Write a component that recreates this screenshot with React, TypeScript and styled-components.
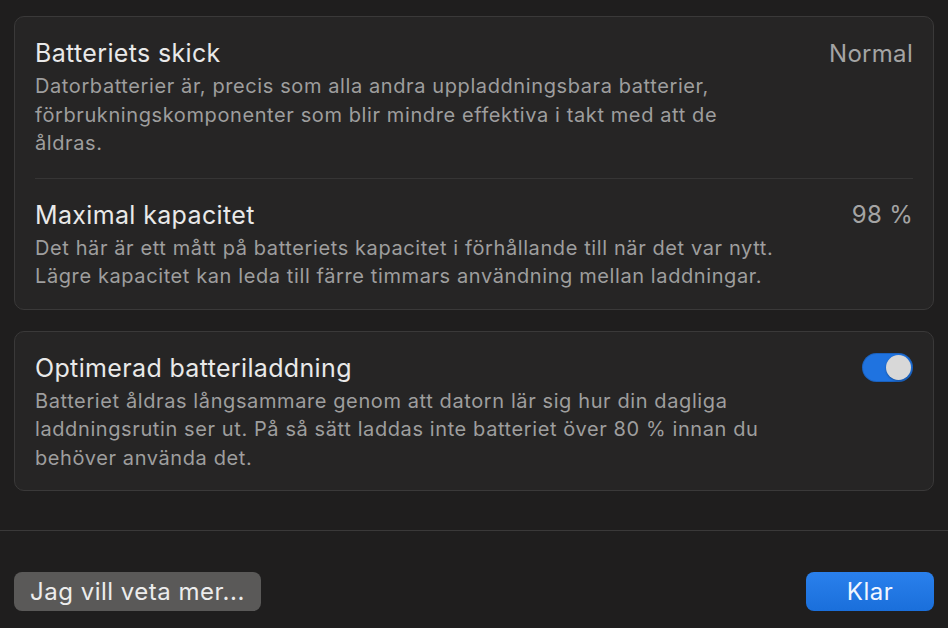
import styled, { createGlobalStyle } from "styled-components"

const GlobalStyle = createGlobalStyle`
  html, body {
    margin: 0;
    padding: 0;
    background: #1f1e1e;
  }
  body {
    font-family: Inter, "Noto Sans", "Liberation Sans", sans-serif;
    -webkit-font-smoothing: antialiased;
  }
`

type Row = {
  title: string
  value?: string
  toggle?: boolean
  lines: string[]
}

const health: Row[] = [
  {
    title: "Batteriets skick",
    value: "Normal",
    lines: [
      "Datorbatterier är, precis som alla andra uppladdningsbara batterier,",
      "förbrukningskomponenter som blir mindre effektiva i takt med att de",
      "åldras.",
    ],
  },
  {
    title: "Maximal kapacitet",
    value: "98 %",
    lines: [
      "Det här är ett mått på batteriets kapacitet i förhållande till när det var nytt.",
      "Lägre kapacitet kan leda till färre timmars användning mellan laddningar.",
    ],
  },
]

const charging: Row = {
  title: "Optimerad batteriladdning",
  toggle: true,
  lines: [
    "Batteriet åldras långsammare genom att datorn lär sig hur din dagliga",
    "laddningsrutin ser ut. På så sätt laddas inte batteriet över 80 % innan du",
    "behöver använda det.",
  ],
}

const SettingRow = ({ row }: { row: Row }) => (
  <StyledRow>
    <StyledHead>
      <StyledTitle>{row.title}</StyledTitle>
      {row.value && <StyledValue>{row.value}</StyledValue>}
      {row.toggle && (
        <StyledSwitch>
          <StyledKnob />
        </StyledSwitch>
      )}
    </StyledHead>
    <StyledDesc>
      {row.lines.map((l) => (
        <span key={l}>{l}</span>
      ))}
    </StyledDesc>
  </StyledRow>
)

export default function App() {
  return (
    <StyledWindow>
      <GlobalStyle />
      <StyledContent>
        <StyledCard>
          {health.map((r, i) => (
            <div key={r.title}>
              {i > 0 && <StyledDivider />}
              <SettingRow row={r} />
            </div>
          ))}
        </StyledCard>
        <StyledCard>
          <SettingRow row={charging} />
        </StyledCard>
      </StyledContent>
      <StyledFooter>
        <StyledButton>Jag vill veta mer...</StyledButton>
        <StyledButton $primary>Klar</StyledButton>
      </StyledFooter>
    </StyledWindow>
  )
}

const StyledWindow = styled.div`
  width: 948px;
  height: 628px;
  background: #1f1e1e;
  display: flex;
  flex-direction: column;
  overflow: hidden;
`

const StyledContent = styled.div`
  display: flex;
  flex-direction: column;
  gap: 21px;
  padding: 16px 14px 0 14px;
  height: 531px;
  box-sizing: border-box;
  border-bottom: 1px solid #3a3939;
`

const StyledCard = styled.section`
  background: #262525;
  border: 1px solid #3a3939;
  border-radius: 10px;
  padding: 0 20px;
`

const StyledRow = styled.div`
  padding: 21px 0 18px;
`

const StyledHead = styled.div`
  display: flex;
  align-items: center;
  justify-content: space-between;
  height: 30px;
`

const StyledTitle = styled.h2`
  margin: 0;
  font-size: 25px;
  line-height: 30px;
  font-weight: 400;
  letter-spacing: 0.35px;
  color: #e9e9e9;
`

const StyledValue = styled.span`
  font-size: 24px;
  letter-spacing: 0.3px;
  color: #a4a4a4;
`

const StyledSwitch = styled.div`
  width: 51px;
  height: 29px;
  border-radius: 15px;
  background: #1f73e0;
  display: flex;
  align-items: center;
  justify-content: flex-end;
  padding: 0 2px;
  box-sizing: border-box;
  box-shadow: inset 0 0 0 1px rgba(0, 0, 0, 0.15);
`

const StyledKnob = styled.span`
  width: 25px;
  height: 25px;
  border-radius: 50%;
  background: #d8d8d8;
  box-shadow: 0 1px 2px rgba(0, 0, 0, 0.3);
`

const StyledDesc = styled.p`
  margin: 4px 0 0;
  display: flex;
  flex-direction: column;
  font-size: 20px;
  line-height: 28.5px;
  letter-spacing: 0.6px;
  color: #9e9e9e;
`

const StyledDivider = styled.hr`
  margin: 2px 0 0;
  border: none;
  border-top: 1px solid #363535;
`

const StyledFooter = styled.div`
  display: flex;
  justify-content: space-between;
  align-items: center;
  padding: 41px 14px 0;
`

const StyledButton = styled.button<{ $primary?: boolean }>`
  height: 39px;
  border: none;
  border-radius: 8px;
  font-family: inherit;
  font-size: 24px;
  letter-spacing: 0.5px;
  color: ${(p) => (p.$primary ? "#f2f6ff" : "#ececec")};
  background: ${(p) => (p.$primary ? "linear-gradient(#2a80ec, #1a6fdb)" : "#5a5958")};
  padding: 0 16px;
  min-width: ${(p) => (p.$primary ? "128px" : "0")};
`
